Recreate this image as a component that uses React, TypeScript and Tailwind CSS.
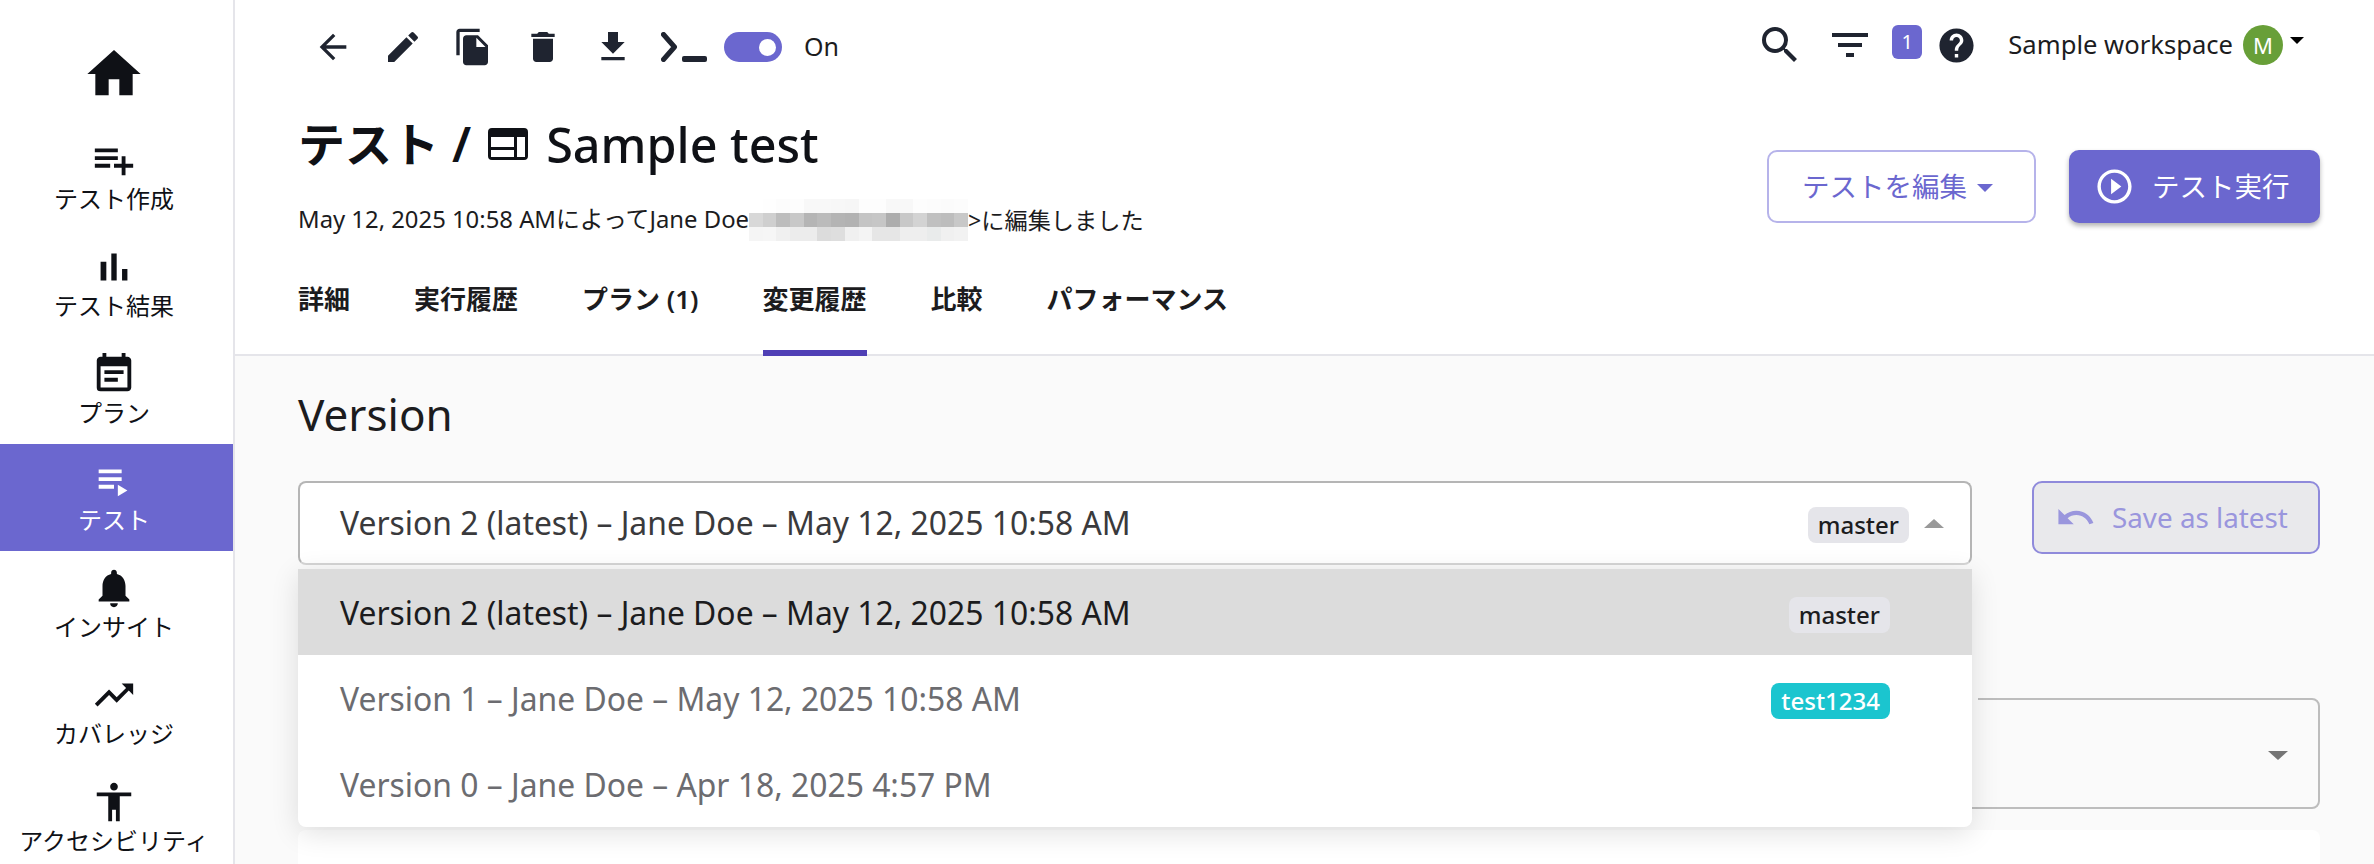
import type { ReactNode } from 'react';
import {
  MdAccessibility,
  MdArrowBack,
  MdDelete,
  MdEdit,
  MdEventNote,
  MdFileCopy,
  MdFileDownload,
  MdFilterList,
  MdHelp,
  MdHome,
  MdNotifications,
  MdPlayCircleOutline,
  MdSearch,
  MdTrendingUp,
  MdUndo,
} from 'react-icons/md';

const Glyph = ({ d }: { d: string }) => (
  <svg width="46" height="46" viewBox="0 0 24 24" fill="currentColor">
    <path d={d} />
  </svg>
);

const NAV_ITEMS = [
  { label: 'テスト作成', icon: <Glyph d="M14 10H2v2h12v-2zm0-4H2v2h12V6zm4 8v-4h-2v4h-4v2h4v4h2v-4h4v-2h-4zM2 16h8v-2H2v2z" /> },
  { label: 'テスト結果', icon: <Glyph d="M5 9.2h3V19H5zM10.600 5h2.800v14h-2.800zm5.600 8H19v6h-2.800z" /> },
  { label: 'プラン', icon: <MdEventNote size={46} /> },
  { label: 'テスト', icon: <Glyph d="M4 10h12v2H4zm0-4h12v2H4zm0 8h8v2H4zm10 0v6l5-3z" />, active: true },
  { label: 'インサイト', icon: <MdNotifications size={46} /> },
  { label: 'カバレッジ', icon: <MdTrendingUp size={46} /> },
  { label: 'アクセシビリティ', icon: <MdAccessibility size={46} /> },
];

const TABS = ['詳細', '実行履歴', 'プラン (1)', '変更履歴', '比較', 'パフォーマンス'];

const MOSAIC = [
  ['#ffffff', '#fefefe', '#fcfcfc', '#fdfdfd', '#f8f8f8', '#f8f8f8', '#f7f7f7', '#f6f6f6', '#fdfdfd', '#fdfdfd', '#f8f8f8', '#f8f8f8', '#fdfdfd', '#fcfcfc', '#fbfbfb', '#fcfcfc'],
  ['#d8d8d8', '#cfcfcf', '#bdbdbd', '#c8c8c8', '#b5b5b5', '#bbbbbb', '#b4b4b4', '#b2b2b2', '#c4c4c4', '#c6c6c6', '#adadad', '#c8c8c8', '#d3d3d3', '#c0c0c0', '#bdbdbd', '#c8c8c8'],
  ['#f5f5f5', '#f6f6f6', '#f0f0f0', '#ececec', '#ececec', '#dcdcdc', '#dedede', '#f0f0f0', '#f4f4f4', '#e6e6e6', '#e6e6e6', '#eeeeee', '#eeeeee', '#e9ebeb', '#f0f0f0', '#f2f2f2'],
];

const Chip = ({ children, teal }: { children: ReactNode; teal?: boolean }) => (
  <span
    className={`mt-[4px] flex h-9 items-center rounded-lg px-[10px] text-[24px] font-medium ${
      teal ? 'bg-[#1bc5cf] text-white' : 'bg-[#e5e5ea] text-[#1c1c1e]'
    }`}
  >
    {children}
  </span>
);

const Sidebar = () => (
  <aside className="flex w-[235px] shrink-0 flex-col border-r-2 border-[#e5e5ea] bg-white pt-[16px] text-[#0f1116]">
    <div className="flex h-[107px] shrink-0 items-center justify-center pr-[5px] pt-[8px]">
      <MdHome size={64} />
    </div>
    {NAV_ITEMS.map(item => (
      <div
        key={item.label}
        className={`flex h-[107px] shrink-0 flex-col items-center pr-[5px] pt-[14px] ${
          item.active ? 'bg-[#6b67cf] text-white' : ''
        }`}
      >
        {item.icon}
        <span className="whitespace-nowrap text-[24px] leading-[32px]">{item.label}</span>
      </div>
    ))}
  </aside>
);

const Toolbar = () => (
  <div className="flex h-[94px] items-center justify-between pl-[15px] text-[#1f2430]">
    <div className="flex items-center gap-[30px]">
      <MdArrowBack size={40} />
      <MdEdit size={40} />
      <MdFileCopy size={40} />
      <MdDelete size={40} />
      <MdFileDownload size={40} />
      <div className="flex items-center gap-[17px]">
        <svg width="46" height="30" viewBox="0 0 46 30" className="-ml-[2px]">
          <path d="M2.500 2.500l11 12.500-11 12.500" fill="none" stroke="currentColor" strokeWidth="5" strokeLinecap="round" strokeLinejoin="round" />
          <rect x="21" y="24" width="25" height="6" rx="2" fill="currentColor" />
        </svg>
        <div className="flex items-center gap-[22px]">
          <div className="flex h-[30px] w-[58px] items-center justify-end rounded-full bg-[#6b67cf] pr-[6px]">
            <div className="size-[17px] rounded-full bg-white" />
          </div>
          <span className="text-[25px] text-[#1c1c1e]">On</span>
        </div>
      </div>
    </div>
    <div className="mb-[4px] flex items-center pr-[16px]">
      <MdSearch size={48} />
      <MdFilterList size={48} className="ml-[22px]" />
      <span className="mb-[6px] ml-[18px] flex h-[34px] w-[30px] items-center justify-center rounded-[6px] bg-[#6b67cf] text-[20px] text-white">
        1
      </span>
      <MdHelp size={41} className="ml-[14px]" />
      <span className="ml-[31px] text-[25.600px] text-[#1c1c1e]">Sample workspace</span>
      <span className="ml-[10px] flex size-[40px] items-center justify-center rounded-full bg-[#689f38] text-[22px] text-white">
        M
      </span>
      <span className="mb-[10px] ml-[7px] h-0 w-0 border-x-[7px] border-t-[7px] border-x-transparent border-t-black" />
    </div>
  </div>
);

const TitleRow = () => (
  <div className="mt-[18px] flex items-start justify-between">
    <div>
      <h1 className="flex h-[64px] items-center text-[48px] text-[#0f1116]">
        <span className="text-[47px] font-bold">テスト</span>
        <span className="ml-[13px] font-semibold">/</span>
        <svg width="40" height="32" viewBox="0 0 40 32" className="ml-[17px]">
          <path
            fillRule="evenodd"
            d="M4 0h32a4 4 0 0 1 4 4v24a4 4 0 0 1-4 4H4a4 4 0 0 1-4-4V4a4 4 0 0 1 4-4zM3 9v10h23V9zM3 22v7h23v-7zM29 9v20h8V9z"
            fill="currentColor"
          />
        </svg>
        <span className="ml-[18px] text-[48.500px] font-medium">Sample test</span>
      </h1>
      <div className="mt-[29px] flex h-[30px] items-center text-[23.850px] text-[#1c1c1e]">
        <span>May 12, 2025 10:58 AMによってJane Doe</span>
        <div className="grid">
          {MOSAIC.map((row, r) => (
            <div key={r} className="flex">
              {row.map((color, c) => (
                <div key={c} className="h-[14px] w-[13.700px]" style={{ backgroundColor: color }} />
              ))}
            </div>
          ))}
        </div>
        <span className="text-[23.200px]">&gt;に編集しました</span>
      </div>
    </div>
    <div className="mt-[38px] flex gap-[33px]">
      <button className="flex h-[73px] w-[269px] items-center justify-center gap-[10px] rounded-[10px] border-2 border-[#b6b3ea] bg-white pr-[8px] text-[27.500px] text-[#6b67cf]">
        テストを編集
        <span className="mt-[2px] h-0 w-0 border-x-[8px] border-t-[8px] border-x-transparent border-t-[#6b67cf]" />
      </button>
      <button className="flex h-[73px] w-[251px] items-center gap-[17px] rounded-[10px] bg-[#6b67cf] pl-[25px] text-[27.500px] text-white shadow-[0_3px_5px_rgba(0,0,0,0.3)]">
        <MdPlayCircleOutline size={41} />
        テスト実行
      </button>
    </div>
  </div>
);

const Tabs = () => (
  <div className="mt-[47px] flex gap-[64px]">
    {TABS.map(tab => (
      <div key={tab} className="relative flex h-[74px] items-start text-[26px] font-semibold leading-[34px] text-[#1c1c1e]">
        {tab}
        {tab === '変更履歴' && <div className="absolute inset-x-0 bottom-0 h-[6px] bg-[#4f3fb5]" />}
      </div>
    ))}
  </div>
);

const VersionMenu = () => (
  <div className="absolute inset-x-0 top-[88px] z-10 overflow-hidden rounded-b-lg bg-white text-[31.850px] shadow-[0_6px_28px_rgba(0,0,0,0.12)]">
    <div className="flex h-[86px] items-center justify-between bg-[#dcdcdc] pl-[42px] pr-[82px] pt-[2px] text-[#1c1c1e]">
      <span>Version 2 (latest) – Jane Doe – May 12, 2025 10:58 AM</span>
      <Chip>master</Chip>
    </div>
    <div className="flex h-[86px] items-center justify-between pl-[42px] pr-[82px] pt-[2px] text-[#6c6c70]">
      <span>Version 1 – Jane Doe – May 12, 2025 10:58 AM</span>
      <Chip teal>test1234</Chip>
    </div>
    <div className="flex h-[86px] items-center pl-[42px] pr-[82px] pt-[2px] text-[#6c6c70]">
      <span>Version 0 – Jane Doe – Apr 18, 2025 4:57 PM</span>
    </div>
  </div>
);

export default function App() {
  return (
    <div className="flex h-[864px] w-[2374px] overflow-hidden bg-white font-['Noto_Sans','Noto_Sans_CJK_JP',sans-serif]">
      <Sidebar />
      <main className="flex min-w-0 flex-1 flex-col">
        <header className="h-[356px] shrink-0 border-b-2 border-[#e5e5ea] bg-white pl-[63px] pr-[54px]">
          <Toolbar />
          <TitleRow />
          <Tabs />
        </header>
        <section className="flex-1 bg-[#fafafa] pl-[63px] pr-[54px]">
          <h2 className="mt-[28px] h-[60px] text-[44px] leading-[60px] text-[#1c1c1e]">Version</h2>
          <div className="mt-[37px] flex gap-[60px]">
            <div className="relative w-[1674px] shrink-0">
              <div className="flex h-[84px] items-center justify-between rounded-lg border-2 border-[#b5b5b5] border-b-[#d5d5d5] bg-white pl-[40px] pr-[26px] text-[31.850px] text-[#3a3a3c]">
                <span>Version 2 (latest) – Jane Doe – May 12, 2025 10:58 AM</span>
                <div className="flex items-center gap-[15px]">
                  <Chip>master</Chip>
                  <span className="h-0 w-0 border-x-[10px] border-b-[9px] border-x-transparent border-b-[#999999]" />
                </div>
              </div>
              <VersionMenu />
            </div>
            <button className="flex h-[73px] w-[288px] items-center gap-[16px] rounded-[10px] border-2 border-[#8f8adb] bg-[#e9e9ec] pl-[21px] text-[27.800px] text-[#9a96dd]">
              <MdUndo size={41} />
              Save as latest
            </button>
          </div>
          <div className="relative mt-[133px] flex h-[111px] items-center justify-end rounded-lg border-2 border-[#bdbdbd] pr-[30px]">
            <div className="absolute -top-[2px] left-[1672px] h-[2px] w-[6px] bg-[#fafafa]" />
            <span className="mt-[3px] h-0 w-0 border-x-[10px] border-t-[9px] border-x-transparent border-t-[#757575]" />
          </div>
          <div className="mt-[21px] h-[60px] rounded-lg bg-white" />
        </section>
      </main>
    </div>
  );
}
